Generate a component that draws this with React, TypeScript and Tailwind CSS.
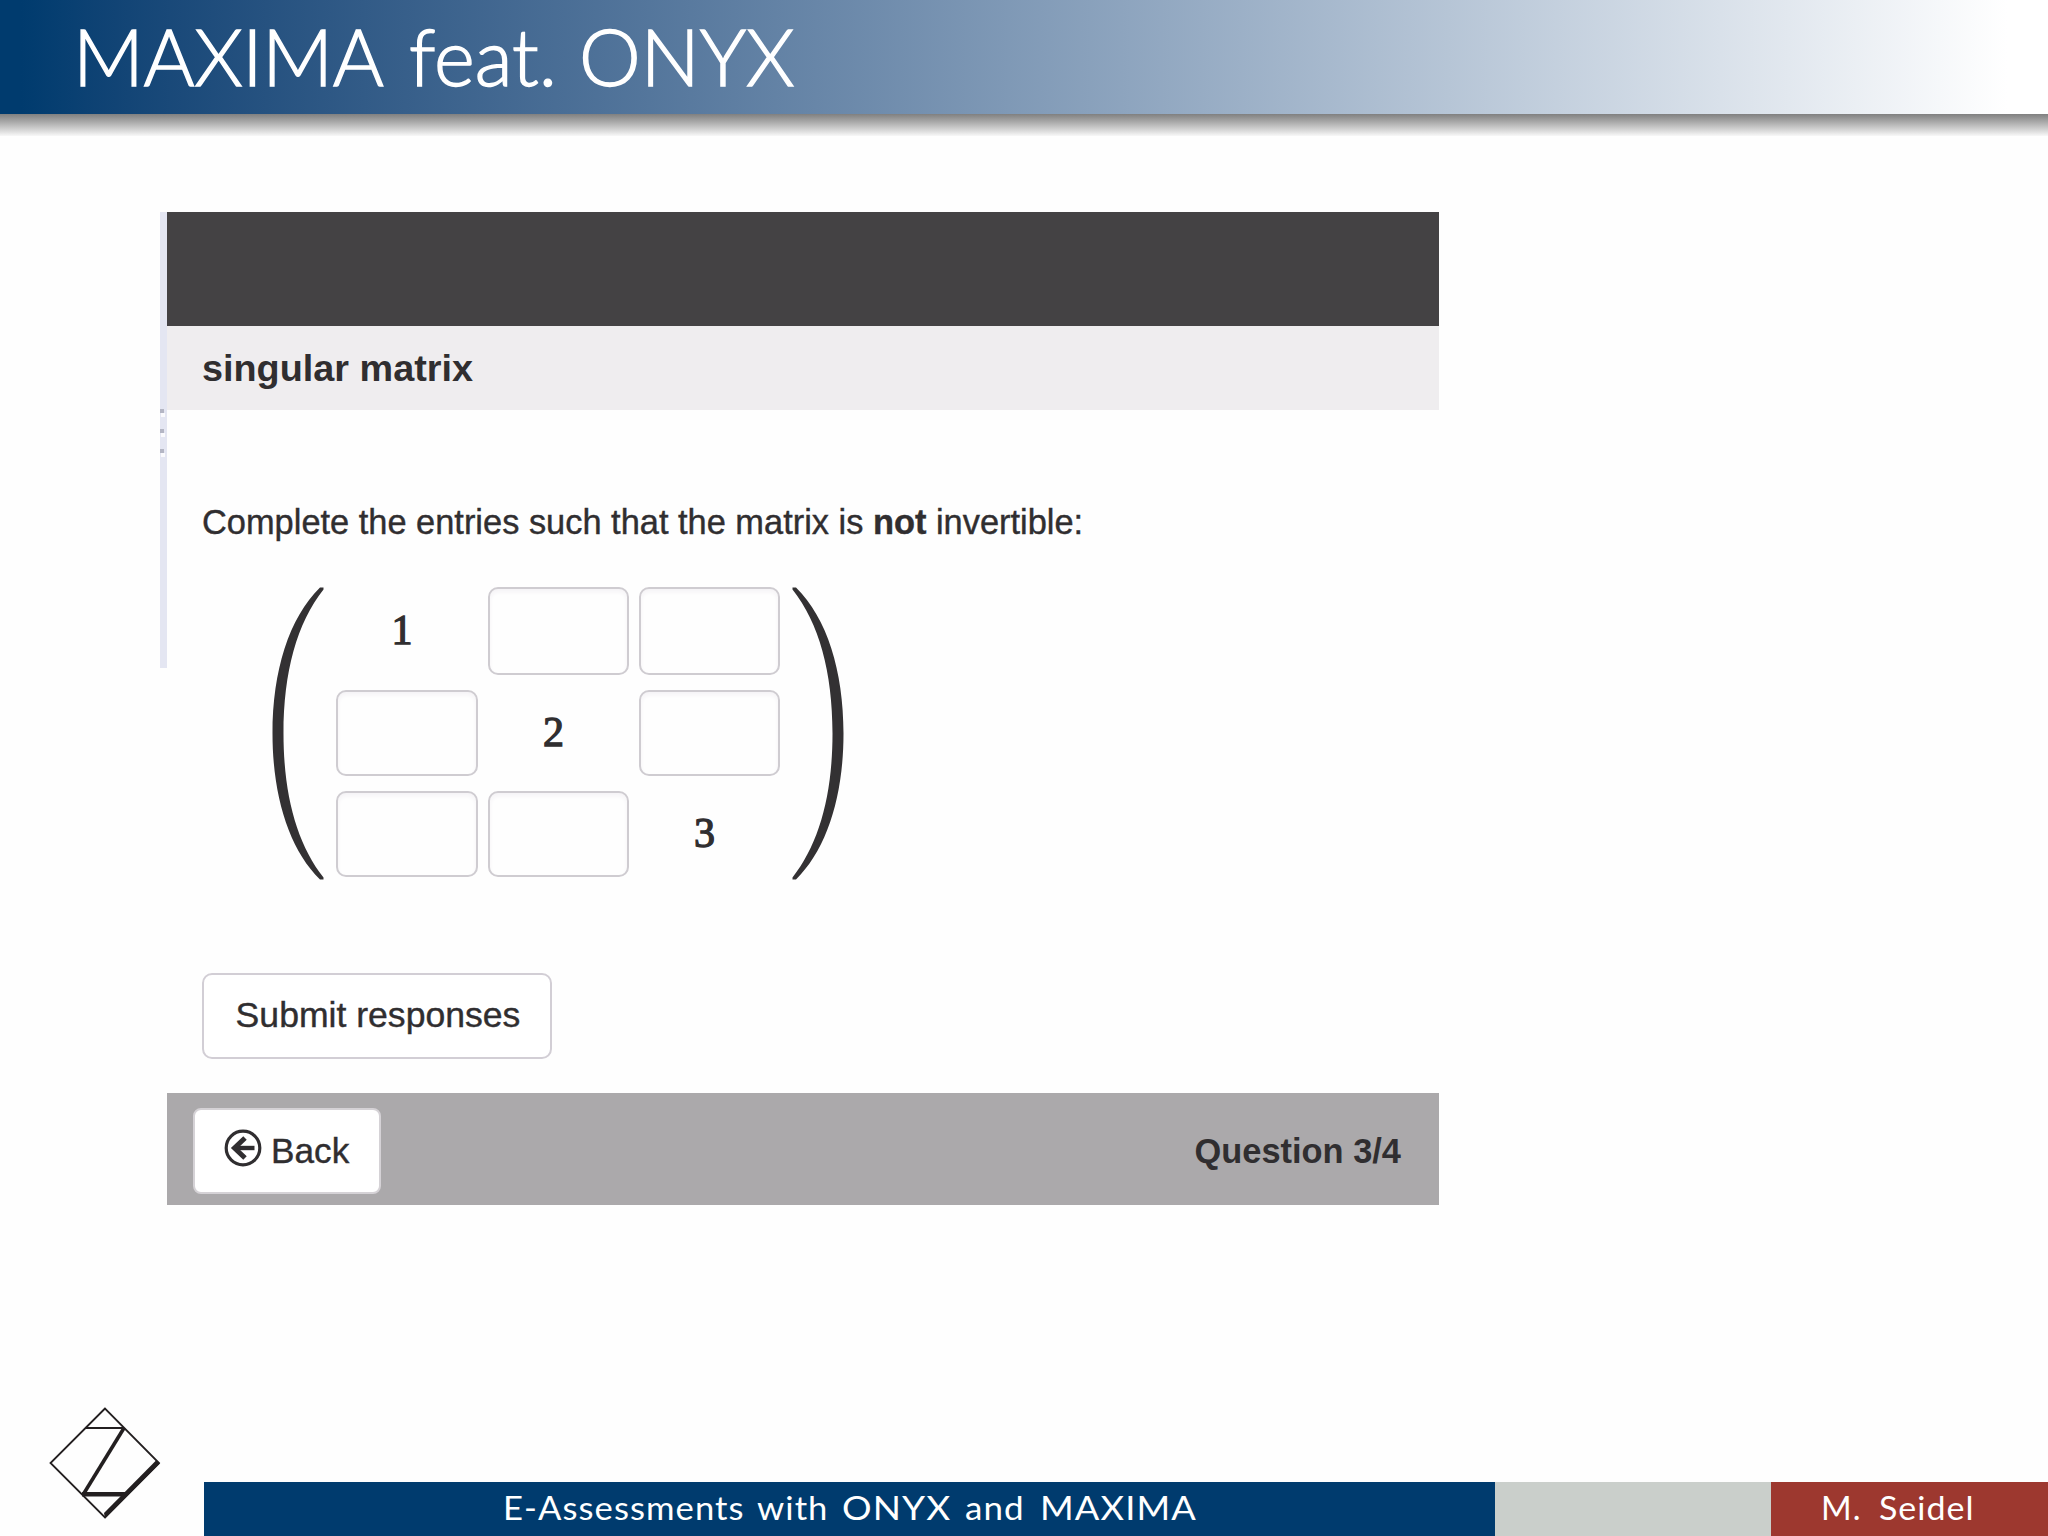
import clsx from 'clsx';

const MATRIX = [
  ['1', null, null],
  [null, '2', null],
  [null, null, '3'],
];

function Paren({ flip = false }: { flip?: boolean }) {
  return (
    <svg
      viewBox="0 0 52 293"
      className={clsx('h-[293px] w-[52px] shrink-0', flip && '-scale-x-100')}
    >
      <path
        d="M51.5 0.5 H48 C17 31 0.5 84 0.5 146.5 C0.5 209 17 262 48 292.5 H51.5 V290.5 C25 257 11.5 208 11.5 146.5 C11.5 85 25 36 51.5 2.5 Z"
        fill="#333133"
      />
    </svg>
  );
}

function BackIcon() {
  return (
    <svg
      viewBox="0 0 38 38"
      className="mb-[6px] h-[38px] w-[38px]"
      fill="none"
      stroke="#302e30"
    >
      <circle cx="19" cy="19" r="16.8" strokeWidth="3.2" />
      <path d="M11 19 H30.5" strokeWidth="4.4" />
      <path d="M21 9 L10.5 19 L21 29" strokeWidth="5" />
    </svg>
  );
}

function Logo() {
  return (
    <svg viewBox="0 0 120 120" className="h-[120px] w-[120px]" stroke="#231f20" fill="none">
      <path d="M61 5.5 L6.5 60 L61 114.5 L115 60 Z" strokeWidth="1.8" />
      <path d="M41 25 H80" strokeWidth="1.8" />
      <path d="M80 25 L39.5 91" strokeWidth="3.6" />
      <path d="M38 89 H84 L80 93.5 H38 Z" fill="#231f20" stroke="none" />
      <path d="M112 57.5 L116 60.5 L61 115.5 L60 110 Z" fill="#231f20" stroke="none" />
    </svg>
  );
}

function Header() {
  return (
    <header>
      <div className="flex h-[114px] bg-linear-to-r from-[#003b6e] from-1% to-white to-98% pl-[73px]">
        <h1 className="flex pt-[3px] font-['Lato',sans-serif] text-[78px] leading-[107px] font-light whitespace-nowrap text-white [-webkit-text-stroke:1.4px_white]">
          <span className="w-[336px] tracking-[-0.4px]">MAXIMA</span>
          <span className="w-[170px]">feat.</span>
          <span>ONYX</span>
        </h1>
      </div>
      <div className="h-[22px] bg-linear-to-b from-[#808080] to-[#f8f8f8]" />
    </header>
  );
}

function Matrix() {
  return (
    <div className="mt-[43px] ml-[105px] flex">
      <Paren />
      <div className="mx-[12px] grid grid-cols-[142px_141px_141px] grid-rows-[88px_86px_86px] gap-x-[10px] gap-y-[15px]">
        {MATRIX.flat().map((value, index) =>
          value ? (
            <div
              key={index}
              className="flex items-center justify-center pr-[10px] pb-[2px] font-['Liberation_Serif',serif] text-[42px] leading-none text-[#302e30] [-webkit-text-stroke:1.3px_#302e30]"
            >
              {value}
            </div>
          ) : (
            <input
              key={index}
              className="min-w-0 rounded-[10px] border-2 border-[#cfccd1] bg-[#fefefe] shadow-[inset_0_3px_4px_#f5f3f6]"
            />
          ),
        )}
      </div>
      <Paren flip />
    </div>
  );
}

export default function App() {
  return (
    <div className="flex h-[1536px] w-[2048px] flex-col overflow-hidden bg-[#fefefe] font-['Liberation_Sans',sans-serif] text-[#302e30]">
      <Header />
      <main className="mt-[76px] ml-[160px] flex h-[993px]">
        <div className="flex h-[456px] w-[7px] flex-col gap-[16px] bg-[#e4e6f2] pt-[197px]">
          <i className="h-[4px] w-[4px] bg-[#b4b6c4] shadow-[1px_4px_0_#fafafd]" />
          <i className="h-[4px] w-[4px] bg-[#b4b6c4] shadow-[1px_4px_0_#fafafd]" />
          <i className="h-[4px] w-[4px] bg-[#b4b6c4] shadow-[1px_4px_0_#fafafd]" />
        </div>
        <section className="flex w-[1272px] flex-col">
          <div className="h-[114px] bg-[#444244]" />
          <h2 className="h-[84px] bg-[#efedef] pl-[35px] text-[37.8px] leading-[84px] font-bold">
            singular matrix
          </h2>
          <p className="mt-[91px] pl-[35px] text-[34.4px] leading-[43px] whitespace-nowrap [-webkit-text-stroke:0.4px_#302e30]">
            Complete the entries such that the matrix is <b>not</b> invertible:
          </p>
          <Matrix />
          <button className="mt-[93px] ml-[35px] h-[86px] w-[350px] rounded-[10px] border-2 border-[#d2ced5] bg-white pl-[2px] text-[35.6px] [-webkit-text-stroke:0.4px_#302e30]">
            Submit responses
          </button>
          <footer className="mt-[34px] flex h-[112px] items-center justify-between bg-[#aba9ab] pt-[4px] pr-[38px] pl-[26px]">
            <button className="flex h-[86px] w-[188px] items-center rounded-[8px] border-2 border-[#d5d2d6] bg-white pl-[29px] text-[35.2px] [-webkit-text-stroke:0.4px_#302e30]">
              <BackIcon />
              <span className="ml-[9px]">Back</span>
            </button>
            <b className="pt-[2px] text-[34.4px]">Question 3/4</b>
          </footer>
        </section>
      </main>
      <div className="mt-auto flex items-end">
        <div className="h-[133px] w-[204px] pl-[44px]">
          <Logo />
        </div>
        <div className="flex h-[54px] w-[1291px] bg-[#003b6e] pl-[299px] font-['Lato',sans-serif] text-[33px] leading-[51px] tracking-[1px] whitespace-nowrap text-white">
          <span className="w-[254px] origin-left scale-x-105">E-Assessments</span>
          <span className="w-[85px] origin-left scale-x-105">with</span>
          <span className="w-[123px] origin-left scale-x-112">ONYX</span>
          <span className="w-[75px] origin-left scale-x-106">and</span>
          <span className="origin-left scale-x-110">MAXIMA</span>
        </div>
        <div className="h-[54px] w-[276px] bg-[#cacfcb]" />
        <div className="flex h-[54px] flex-1 bg-[#9d382f] pl-[50px] font-['Lato',sans-serif] text-[33px] leading-[51px] tracking-[1px] whitespace-nowrap text-white">
          <span className="w-[58px]">M.</span>
          <span className="origin-left scale-x-103">Seidel</span>
        </div>
      </div>
    </div>
  );
}
